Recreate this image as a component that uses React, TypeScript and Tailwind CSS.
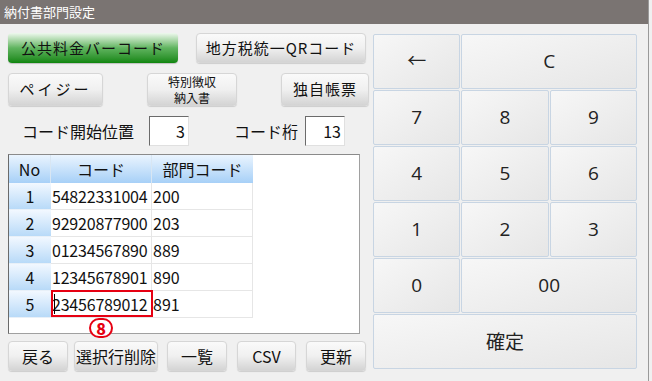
import React from 'react';

const btnFont = { fontFamily: '"Noto Sans CJK JP", "Noto Sans", sans-serif' };

const GrayButton: React.FC<{ className?: string; children: React.ReactNode }> = ({ className = '', children }) => (
  <div
    className={`flex items-center justify-center rounded-[4px] border border-[#d6d6d6] bg-gradient-to-b from-[#fafafa] via-[#f0f0f0] to-[#d4d4d4] text-[#111] shadow-[0_1px_1px_rgba(0,0,0,0.15)] ${className}`}
  >
    {children}
  </div>
);

const KeyButton: React.FC<{ className?: string; children: React.ReactNode }> = ({ className = '', children }) => (
  <div
    className={`flex items-center justify-center rounded-[2px] border border-[#c8d5e3] bg-gradient-to-br from-[#f7f7f7] to-[#e6e6e6] text-[19px] text-[#222] ${className}`}
  >
    {children}
  </div>
);

const rows = [
  ['1', '54822331004', '200'],
  ['2', '92920877900', '203'],
  ['3', '01234567890', '889'],
  ['4', '12345678901', '890'],
  ['5', '23456789012', '891'],
];

export default function App() {
  return (
    <div className="w-[652px] h-[381px] bg-[#f0f0f0] overflow-hidden" style={btnFont}>
      <div className="w-[649px] h-[381px] border-r border-[#9a9a9a] flex flex-col">
        <div className="h-[24px] bg-[#7a7472] text-white text-[13px] leading-[24px] pl-[4px]">納付書部門設定</div>

        <div className="flex flex-1">
          {/* left panel */}
          <div className="w-[369px] pl-[8px] pt-[9px] flex flex-col">
            <div className="flex gap-[18px] h-[30px]">
              <div className="w-[170px] flex items-center justify-center rounded-[4px] bg-gradient-to-b from-[#eef8ee] via-[#5fb45f] to-[#0b860b] text-[#111] text-[15px] tracking-[1px] shadow-[0_1px_1px_rgba(0,0,0,0.2)]">
                公共料金バーコード
              </div>
              <GrayButton className="w-[170px] text-[15px] tracking-[1px]">地方税統一QRコード</GrayButton>
            </div>

            <div className="flex justify-between h-[33px] mt-[10px]">
              <GrayButton className="w-[95px] text-[15px] tracking-[3px]">ペイジー</GrayButton>
              <GrayButton className="w-[90px] text-[12px] leading-[16px] flex-col">
                <span className="block h-[16px]">特別徴収</span>
                <span className="block h-[16px]">納入書</span>
              </GrayButton>
              <GrayButton className="w-[88px] text-[15px] tracking-[1px]">独自帳票</GrayButton>
            </div>

            <div className="flex items-center h-[30px] mt-[10px] text-[16px] text-[#111]">
              <span className="ml-[14px] w-[127px]">コード開始位置</span>
              <div className="w-[40px] h-[30px] bg-white border border-t-[#6b6b6b] border-l-[#6b6b6b] border-r-[#e0e0e0] border-b-[#e0e0e0] text-right pr-[3px] leading-[28px]">3</div>
              <span className="ml-[45px] w-[71px]">コード桁</span>
              <div className="w-[40px] h-[30px] bg-white border border-t-[#6b6b6b] border-l-[#6b6b6b] border-r-[#e0e0e0] border-b-[#e0e0e0] text-right pr-[3px] leading-[28px]">13</div>
            </div>

            {/* grid */}
            <div className="relative mt-[8px] w-[352px] h-[180px] bg-white border border-[#a0a0a0] border-l-[#6a6a6a] border-t-[#8a8a8a] text-[16px] text-[#111]">
              <div className="flex h-[28px]">
                <div className="w-[42px] flex items-center justify-center bg-gradient-to-b from-[#eaf4fe] to-[#a7d0f7] border-r border-[#d8e6f3]">No</div>
                <div className="w-[101px] flex items-center justify-center bg-gradient-to-b from-[#eaf4fe] to-[#a7d0f7] border-r border-[#d8e6f3]">コード</div>
                <div className="w-[101px] flex items-center justify-center bg-gradient-to-b from-[#eaf4fe] to-[#a7d0f7]">部門コード</div>
              </div>
              {rows.map((r) => (
                <div key={r[0]} className="flex h-[27px]">
                  <div className="w-[42px] flex items-center justify-center bg-gradient-to-b from-[#f2f8ff] to-[#b8daf8] border-b border-[#e8f0f8]">{r[0]}</div>
                  <div className="w-[101px] flex items-center pl-[1px] border-r border-b border-[#e6e6e6] tracking-[-0.2px]">{r[1]}</div>
                  <div className="w-[101px] flex items-center pl-[1px] border-r border-b border-[#e6e6e6]">{r[2]}</div>
                </div>
              ))}
              {/* highlight box */}
              <div className="absolute left-[42px] top-[135px] w-[102px] h-[27px] border-2 border-[#e60012]">
                <div className="absolute left-[1px] top-[2px] w-[1px] h-[20px] bg-black" />
              </div>
              <div className="absolute left-[80px] top-[163px] w-[24px] h-[20px] rounded-full border-2 border-[#e60012] bg-white flex items-center justify-center text-[#e60012] text-[16px] font-extrabold leading-none">
                8
              </div>
            </div>

            <div className="flex h-[30px] mt-[7px] text-[16px]">
              <GrayButton className="w-[60px]">戻る</GrayButton>
              <GrayButton className="w-[84px] ml-[6px]">選択行削除</GrayButton>
              <GrayButton className="w-[60px] ml-[9px]">一覧</GrayButton>
              <GrayButton className="w-[59px] ml-[10px]">CSV</GrayButton>
              <GrayButton className="w-[60px] ml-[10px]">更新</GrayButton>
            </div>
          </div>

          {/* keypad */}
          <div
            className="ml-[4px] mt-[10px] w-[264px] h-[335px] grid grid-cols-3 grid-rows-6 gap-[1px]"
            style={{ fontFamily: '"Open Sans", "Noto Sans CJK JP", sans-serif' }}
          >
            <KeyButton>←</KeyButton>
            <KeyButton className="col-span-2">C</KeyButton>
            <KeyButton>7</KeyButton>
            <KeyButton>8</KeyButton>
            <KeyButton>9</KeyButton>
            <KeyButton>4</KeyButton>
            <KeyButton>5</KeyButton>
            <KeyButton>6</KeyButton>
            <KeyButton>1</KeyButton>
            <KeyButton>2</KeyButton>
            <KeyButton>3</KeyButton>
            <KeyButton>0</KeyButton>
            <KeyButton className="col-span-2">00</KeyButton>
            <KeyButton className="col-span-3 text-[17px]">
              <span style={btnFont}>確定</span>
            </KeyButton>
          </div>
        </div>
      </div>
    </div>
  );
}
